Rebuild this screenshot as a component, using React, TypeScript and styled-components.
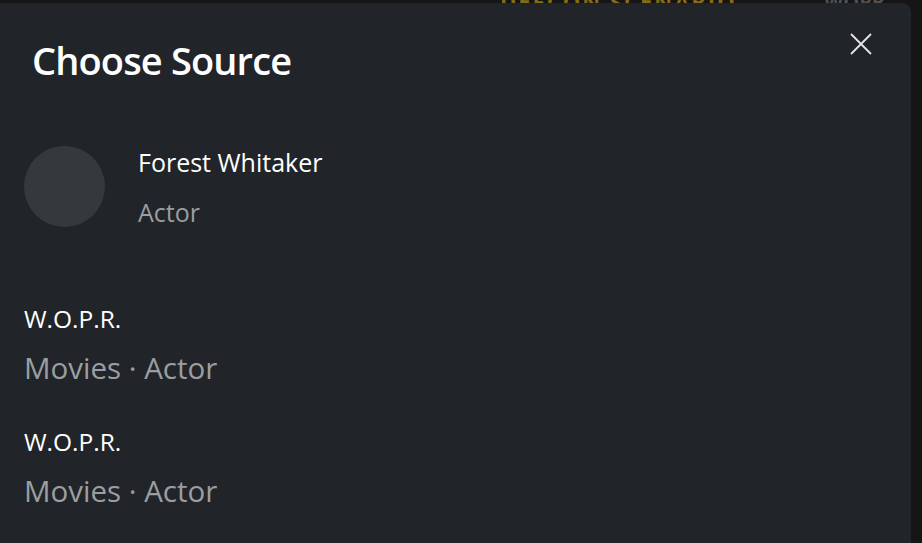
import styled, { createGlobalStyle } from 'styled-components';

const GlobalStyle = createGlobalStyle`
  html, body {
    margin: 0;
    padding: 0;
    background: #151515;
    font-family: 'Open Sans', 'Noto Sans', sans-serif;
    overflow: hidden;
  }
`;

type Source = {
  title: string;
  meta: string;
};

const sources: Source[] = [
  { title: 'W.O.P.R.', meta: 'Movies · Actor' },
  { title: 'W.O.P.R.', meta: 'Movies · Actor' },
];

const App = () => {
  return (
    <>
      <GlobalStyle />
      <Page>
        <Backdrop>
          <BackTitle>DEFCON SCENARIO</BackTitle>
          <BackMeta>WOPR</BackMeta>
        </Backdrop>
        <Modal>
          <Header>
            <Title>Choose Source</Title>
            <CloseButton aria-label='Close'>
              <svg width='22' height='22' viewBox='0 0 22 22'>
                <path d='M1 1 L21 21 M21 1 L1 21' stroke='#e4e5e6' strokeWidth='1.8' fill='none' />
              </svg>
            </CloseButton>
          </Header>
          <Body>
            <Person>
              <Avatar />
              <PersonText>
                <PersonName>Forest Whitaker</PersonName>
                <PersonRole>Actor</PersonRole>
              </PersonText>
            </Person>
            {sources.map((s, i) => (
              <SourceItem key={i}>
                <SourceTitle>{s.title}</SourceTitle>
                <SourceMeta>{s.meta}</SourceMeta>
              </SourceItem>
            ))}
          </Body>
        </Modal>
      </Page>
    </>
  );
};

export default App;

// Styling

const Page = styled.div`
  position: relative;
  width: 922px;
  height: 543px;
  padding-top: 3px;
  box-sizing: border-box;
  overflow: hidden;
`;

const Backdrop = styled.div`
  position: absolute;
  top: -14px;
  left: 0;
  right: 0;
  height: 20px;
  pointer-events: none;
`;

const BackTitle = styled.span`
  position: absolute;
  left: 500px;
  top: 0;
  font-size: 22px;
  font-weight: 700;
  letter-spacing: 2px;
  color: #b58e1a;
  opacity: 0.7;
`;

const BackMeta = styled.span`
  position: absolute;
  left: 824px;
  top: 2px;
  font-size: 20px;
  font-weight: 700;
  color: #777;
  opacity: 0.6;
`;

const Modal = styled.div`
  position: relative;
  width: 911px;
  height: 100%;
  background: #212529;
  border-top-right-radius: 9px;
  color: #fff;
`;

const Header = styled.div`
  display: flex;
  justify-content: space-between;
  align-items: flex-start;
  padding: 34px 39px 2px 32px;
`;

const Title = styled.h2`
  margin: 0;
  font-size: 38px;
  line-height: 46px;
  font-weight: 600;
  letter-spacing: -0.85px;
  color: #fff;
`;

const CloseButton = styled.button`
  display: flex;
  background: none;
  border: none;
  padding: 0;
  margin-top: -4px;
  cursor: pointer;
`;

const Body = styled.div`
  display: flex;
  flex-direction: column;
  padding: 0 24px;
`;

const Person = styled.div`
  display: flex;
  align-items: center;
  gap: 33px;
  margin-top: 61px;
`;

const Avatar = styled.div`
  width: 81px;
  height: 81px;
  border-radius: 50%;
  background: #35393d;
  flex-shrink: 0;
`;

const PersonText = styled.div`
  display: flex;
  flex-direction: column;
  gap: 20px;
`;

const PersonName = styled.div`
  font-size: 25px;
  line-height: 30px;
  color: #fff;
`;

const PersonRole = styled.div`
  font-size: 25px;
  line-height: 30px;
  color: #9b9ea1;
`;

const SourceItem = styled.div`
  display: flex;
  flex-direction: column;
  gap: 16px;
  margin-top: 77px;

  & + & {
    margin-top: 41px;
  }
`;

const SourceTitle = styled.div`
  font-size: 24.5px;
  line-height: 30px;
  color: #fff;
`;

const SourceMeta = styled.div`
  font-size: 29.5px;
  line-height: 36px;
  color: #9b9ea1;
`;
